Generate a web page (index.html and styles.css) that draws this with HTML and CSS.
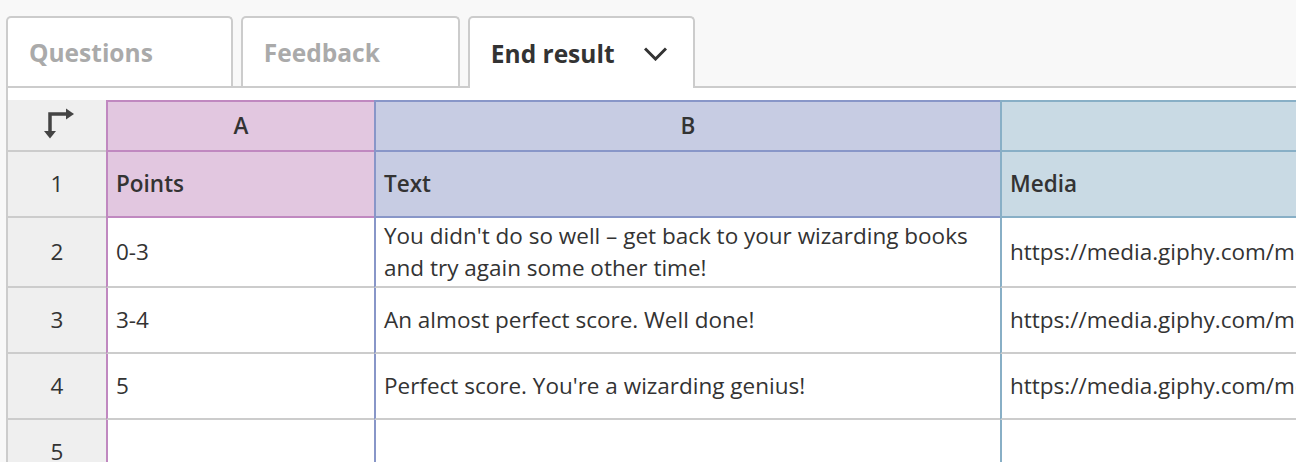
FILE: index.html
```html
<!DOCTYPE html>
<html lang="en">
<head>
<meta charset="utf-8">
<title>End result</title>
<link rel="stylesheet" href="styles.css">
</head>
<body>
<div class="page">
  <div class="tabs">
    <div class="tab"><span class="tab-label">Questions</span><span class="tab-caret hidden"></span></div>
    <div class="tab"><span class="tab-label">Feedback</span><span class="tab-caret hidden"></span></div>
    <div class="tab active"><span class="tab-label">End result</span>
      <span class="tab-caret">
        <svg width="23" height="14" viewBox="0 0 23 14"><path d="M1 1.5 L11.5 12 L22 1.5" fill="none" stroke="#333" stroke-width="3"/></svg>
      </span>
    </div>
  </div>
  <div class="panel">
    <div class="sheet">
      <div class="cell corner">
        <svg width="40" height="40" viewBox="37 106 40 40">
          <path d="M50 133 V115 H67" fill="none" stroke="#444" stroke-width="3.5"/>
          <path d="M66 109.5 L74 115 L66 120.5 Z" fill="#444"/>
          <path d="M44 132 L56 132 L50 139.5 Z" fill="#444"/>
        </svg>
      </div>
      <div class="cell colhead a">A</div>
      <div class="cell colhead b">B</div>
      <div class="cell colhead c"></div>

      <div class="cell rowhead">1</div>
      <div class="cell title a">Points</div>
      <div class="cell title b">Text</div>
      <div class="cell title c">Media</div>

      <div class="cell rowhead">2</div>
      <div class="cell data a">0-3</div>
      <div class="cell data b">You didn't do so well – get back to your wizarding books and try again some other time!</div>
      <div class="cell data c"><span class="nowrap">https://media.giphy.com/media/l2JhtKtDWYNKdRpoA/giphy.gif</span></div>

      <div class="cell rowhead">3</div>
      <div class="cell data a">3-4</div>
      <div class="cell data b">An almost perfect score. Well done!</div>
      <div class="cell data c"><span class="nowrap">https://media.giphy.com/media/3o7TKSjRrfIPjeiVyM/giphy.gif</span></div>

      <div class="cell rowhead">4</div>
      <div class="cell data a">5</div>
      <div class="cell data b">Perfect score. You're a wizarding genius!</div>
      <div class="cell data c"><span class="nowrap">https://media.giphy.com/media/ujUdrdpX7Ok5W/giphy.gif</span></div>

      <div class="cell rowhead">5</div>
      <div class="cell data a"></div>
      <div class="cell data b"></div>
      <div class="cell data c"></div>
    </div>
  </div>
</div>
</body>
</html>
```

FILE: styles.css
```css
html, body {
  margin: 0;
  padding: 0;
  background: #f8f8f8;
  overflow: hidden;
  width: 1296px;
  height: 462px;
}

.page {
  font-family: "Open Sans", Lato, sans-serif;
  color: #333;
  padding-top: 16px;
}

.tabs {
  display: flex;
  gap: 8px;
  padding-left: 6px;
  align-items: flex-start;
}

.tab {
  display: flex;
  align-items: center;
  box-sizing: border-box;
  height: 70px;
  padding: 0 26px 0 21px;
  background: #fff;
  border: 2px solid #ccc;
  border-bottom: none;
  border-radius: 5px 5px 0 0;
  font-size: 24.5px;
  font-weight: 700;
  color: #aaa;
}

.tab.active {
  color: #333;
  height: 72px;
  margin-bottom: -2px;
  position: relative;
  z-index: 1;
}

.tab-caret {
  display: flex;
  align-items: center;
  justify-content: center;
  width: 23px;
  margin-left: 29px;
  padding-top: 2px;
}

.tab-caret.hidden {
  visibility: hidden;
}

.panel {
  margin-left: 6px;
  background: #fff;
  border-left: 2px solid #ccc;
  border-top: 2px solid #ccc;
  padding-top: 12px;
  height: 400px;
}

.sheet {
  display: grid;
  grid-template-columns: 98px 268px 626px 400px;
  grid-template-rows: 52px 66px auto 66px 66px 66px;
  font-size: 22.5px;
  line-height: 32px;
}

.cell {
  box-sizing: border-box;
  display: flex;
  align-items: center;
  padding: 2px 8px;
  border-bottom: 2px solid #ccc;
  overflow: hidden;
}

.corner {
  background: #efefef;
  justify-content: center;
  padding: 0;
}

.rowhead {
  background: #efefef;
  justify-content: center;
  padding: 0;
}

.colhead {
  justify-content: center;
  font-weight: 600;
  border-top: 2px solid;
}

.title {
  font-weight: 600;
}

.a { border-left: 2px solid #c088c0; }
.b { border-left: 2px solid #8896c8; }
.c { border-left: 2px solid #88afc6; }

.colhead.a, .title.a { background: #e2c7e0; border-top-color: #c088c0; border-bottom-color: #c088c0; }
.colhead.b, .title.b { background: #c7cce3; border-top-color: #8896c8; border-bottom-color: #8896c8; }
.colhead.c, .title.c { background: #c9dae4; border-top-color: #88afc6; border-bottom-color: #88afc6; }

.nowrap {
  white-space: nowrap;
}
```
